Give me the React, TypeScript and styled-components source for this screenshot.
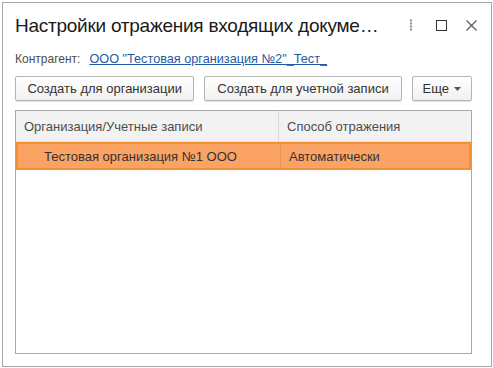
import styled, { createGlobalStyle } from "styled-components";

const GlobalStyle = createGlobalStyle`
  html, body {
    margin: 0;
    padding: 0;
    background: #ffffff;
    font-family: "Liberation Sans", Arial, sans-serif;
  }
`;

const rows = [{ org: "Тестовая организация №1 ООО", mode: "Автоматически" }];

const Window = styled.div`
  box-sizing: border-box;
  margin: 2px 1px 0 2px;
  width: 490px;
  height: 365px;
  border: 1px solid #a6a6a6;
  background: #fff;
  display: flex;
  flex-direction: column;
  padding: 0 19px 12px 12px;
`;

const TitleBar = styled.div`
  display: flex;
  align-items: center;
  height: 44px;
  margin-right: -14px;
`;

const Title = styled.div`
  flex: 1;
  font-size: 19px;
  letter-spacing: -0.25px;
  color: #1a1a1a;
  padding-top: 2px;
  white-space: nowrap;
`;

const TitleButton = styled.div`
  width: 30px;
  height: 30px;
  display: flex;
  align-items: center;
  justify-content: center;
`;

const Field = styled.div`
  display: flex;
  align-items: center;
  gap: 9px;
  height: 24px;
  font-size: 12px;
  color: #4d4d4d;
`;

const Link = styled.a`
  color: #1f5aa6;
  font-size: 12.7px;
  text-decoration: underline;
  cursor: pointer;
`;

const Toolbar = styled.div`
  display: flex;
  gap: 10px;
  margin-top: 5px;
`;

const Button = styled.div<{ $w: number }>`
  box-sizing: border-box;
  width: ${(p) => p.$w}px;
  height: 25px;
  border: 1px solid #b4b4b4;
  border-radius: 2px;
  background: linear-gradient(#ffffff, #f1f1f1);
  box-shadow: 0 1px 1px rgba(0, 0, 0, 0.12);
  display: flex;
  align-items: center;
  justify-content: center;
  gap: 5px;
  font-size: 13px;
  color: #333;
`;

const Table = styled.div`
  box-sizing: border-box;
  margin-top: 9px;
  flex: 1;
  border: 1px solid #a9a9a9;
  background: #fff;
`;

const Row = styled.div<{ $head?: boolean; $sel?: boolean }>`
  box-sizing: border-box;
  display: grid;
  grid-template-columns: 263px 1fr;
  height: ${(p) => (p.$head ? 31 : 28)}px;
  background: ${(p) => (p.$head ? "#f2f2f2" : p.$sel ? "#fba265" : "#fff")};
  border: ${(p) => (p.$sel ? "2px solid #f29035" : "none")};
  border-bottom: ${(p) => (p.$head ? "1px solid #e0e0e0" : p.$sel ? "2px solid #f29035" : "none")};
  font-size: 13px;
  color: ${(p) => (p.$head ? "#4d4d4d" : "#333")};
`;

const Cell = styled.div<{ $indent?: number; $last?: boolean }>`
  display: flex;
  align-items: center;
  padding-left: ${(p) => p.$indent ?? 8}px;
  border-right: ${(p) => (p.$last ? "none" : "1px solid rgba(0,0,0,0.1)")};
  white-space: nowrap;
`;

export default function App() {
  return (
    <>
      <GlobalStyle />
      <Window>
        <TitleBar>
          <Title>Настройки отражения входящих докуме…</Title>
          <TitleButton>
            <svg width="4" height="12" viewBox="0 0 4 12">
              <circle cx="2" cy="1.5" r="1.2" fill="#9a9a9a" />
              <circle cx="2" cy="4.5" r="1.2" fill="#9a9a9a" />
              <circle cx="2" cy="7.5" r="1.2" fill="#9a9a9a" />
              <circle cx="2" cy="10.5" r="1.2" fill="#9a9a9a" />
            </svg>
          </TitleButton>
          <TitleButton>
            <svg width="11" height="11" viewBox="0 0 11 11">
              <rect x="0.5" y="0.5" width="10" height="10" fill="none" stroke="#333" strokeWidth="1" />
            </svg>
          </TitleButton>
          <TitleButton>
            <svg width="11" height="11" viewBox="0 0 11 11">
              <path d="M0.5 0.5 L10.5 10.5 M10.5 0.5 L0.5 10.5" stroke="#555" strokeWidth="1.1" />
            </svg>
          </TitleButton>
        </TitleBar>
        <Field>
          <span>Контрагент:</span>
          <Link>ООО "Тестовая организация №2"_Тест_</Link>
        </Field>
        <Toolbar>
          <Button $w={181}>Создать для организации</Button>
          <Button $w={199}>Создать для учетной записи</Button>
          <Button $w={61}>
            Еще
            <svg width="7" height="4" viewBox="0 0 7 4">
              <path d="M0 0 L7 0 L3.5 4 Z" fill="#555" />
            </svg>
          </Button>
        </Toolbar>
        <Table>
          <Row $head>
            <Cell>Организация/Учетные записи</Cell>
            <Cell $last>Способ отражения</Cell>
          </Row>
          {rows.map((r) => (
            <Row $sel key={r.org}>
              <Cell $indent={26}>{r.org}</Cell>
              <Cell $last>{r.mode}</Cell>
            </Row>
          ))}
        </Table>
      </Window>
    </>
  );
}
